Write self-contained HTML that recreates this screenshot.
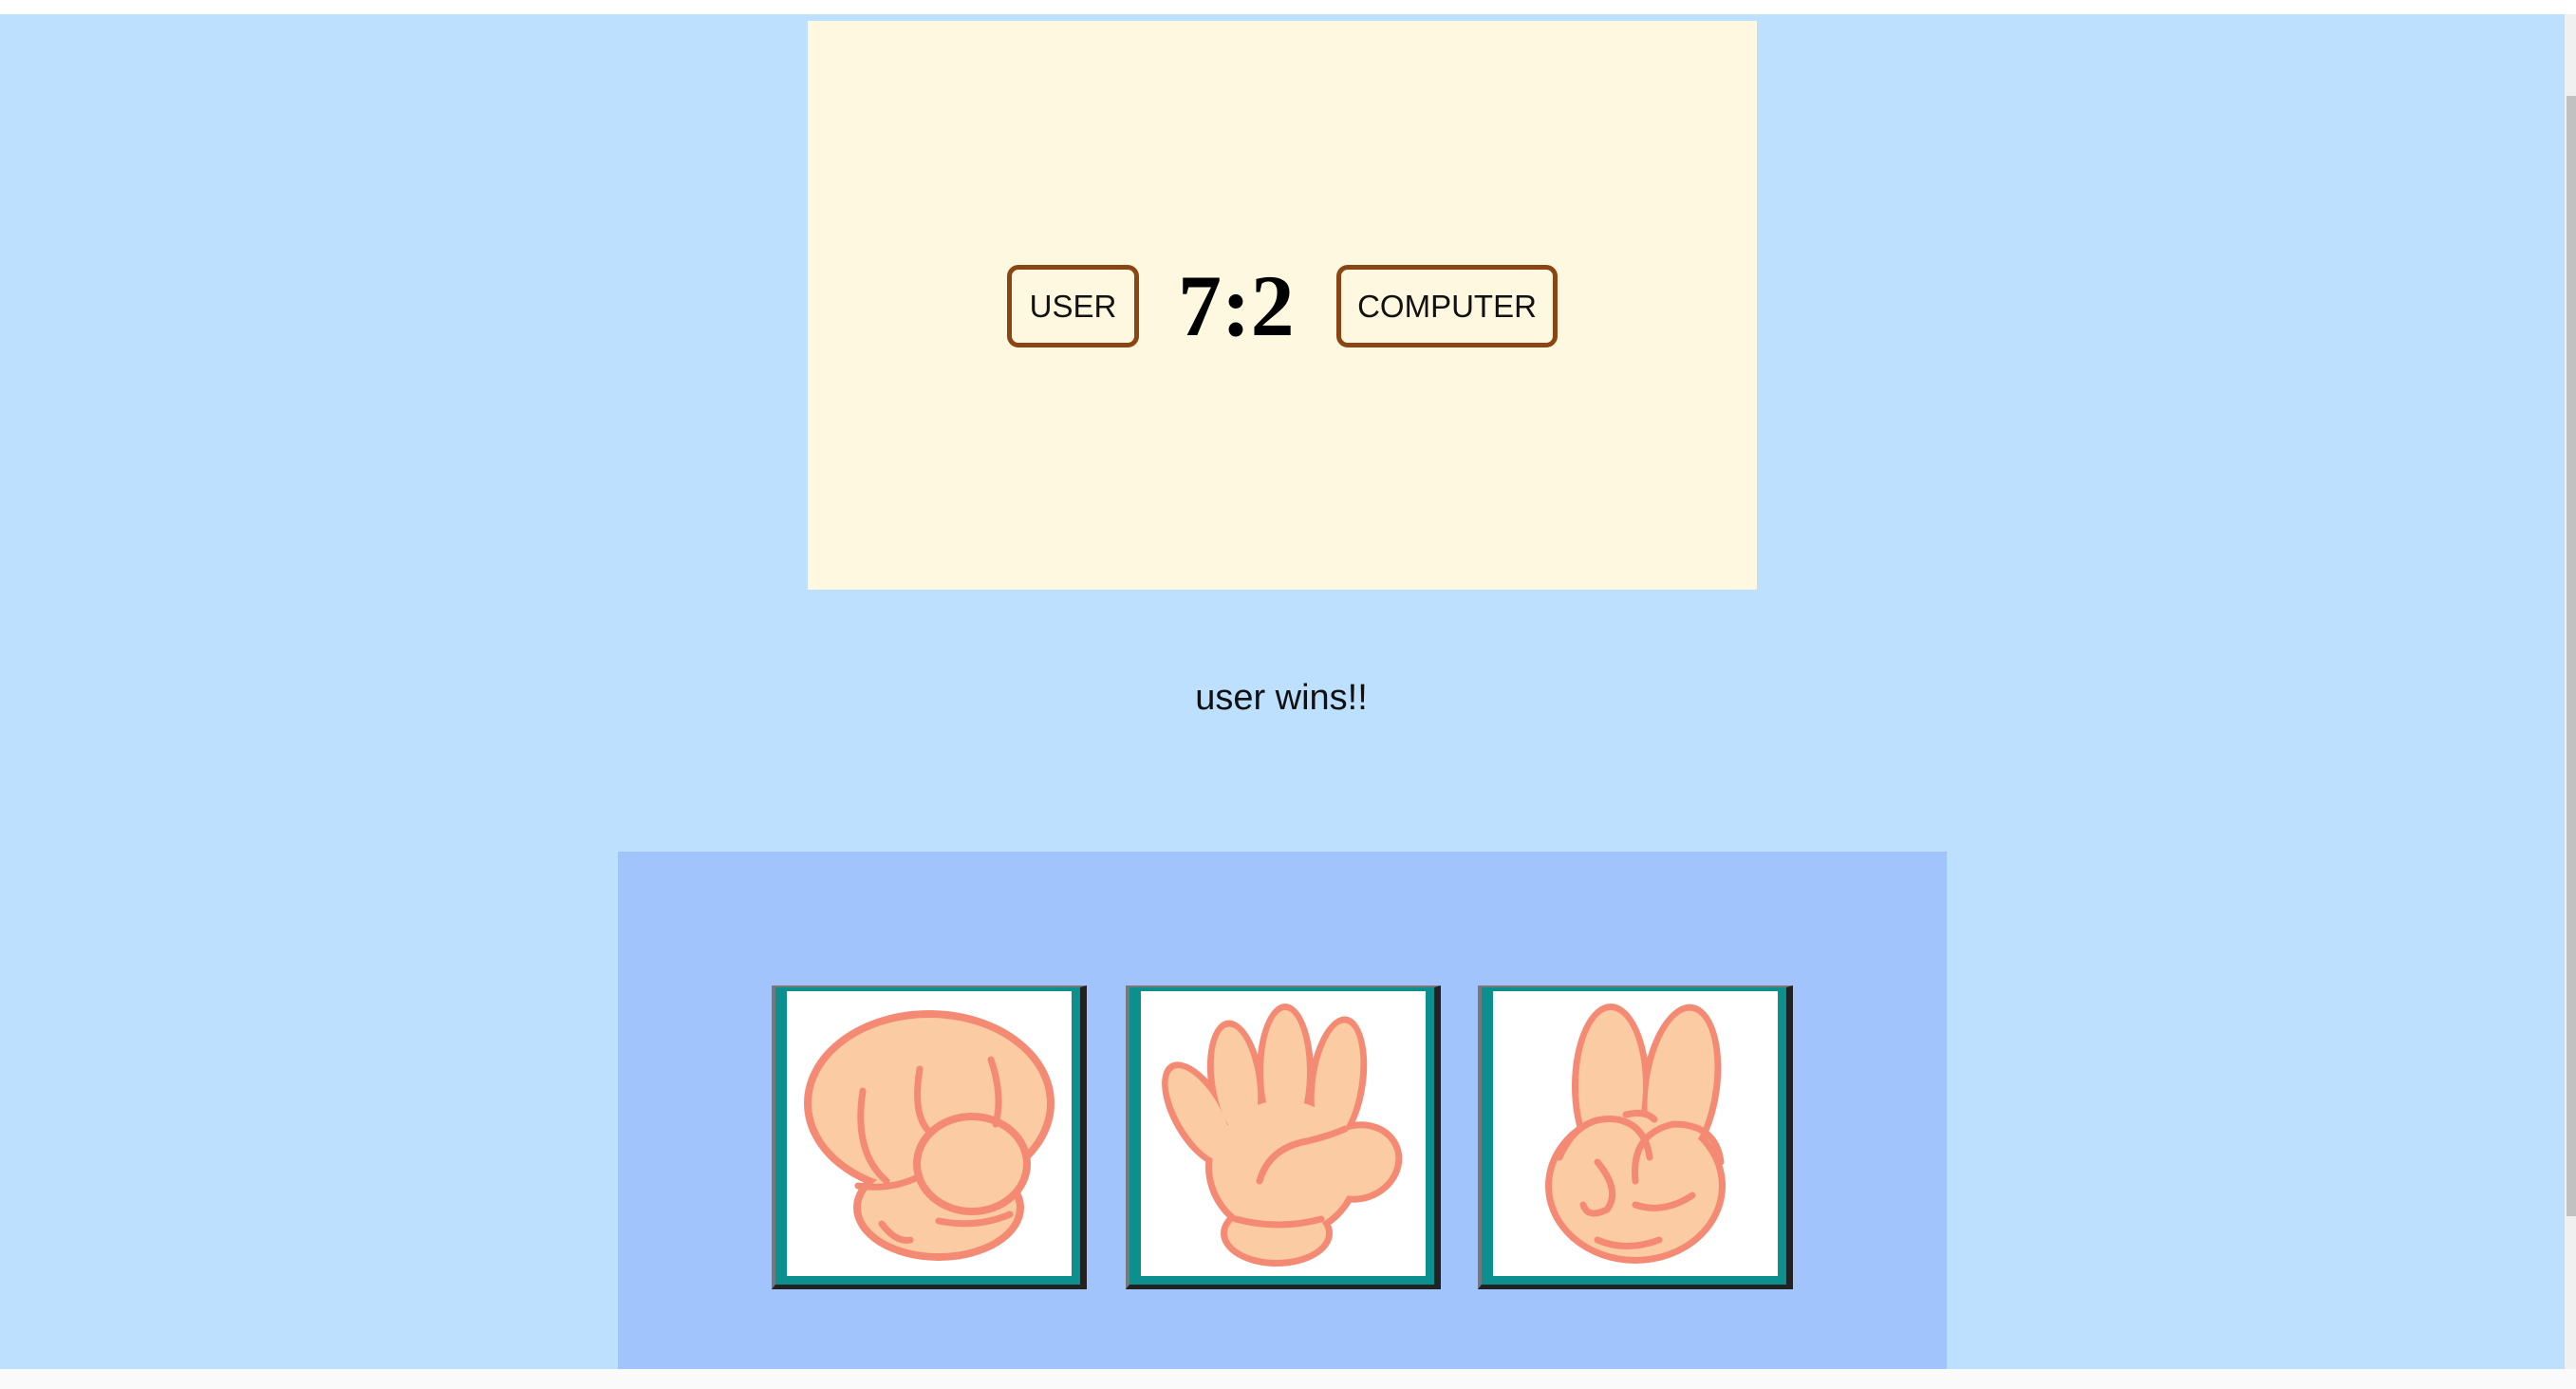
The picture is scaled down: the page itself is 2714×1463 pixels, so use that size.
<!DOCTYPE html>
<html><head><meta charset="utf-8"><style>
*{margin:0;padding:0;box-sizing:border-box}
body{width:2714px;height:1463px;background:#fafafa;position:relative;overflow:hidden;font-family:"Liberation Sans",Arial,sans-serif}
.topw{position:absolute;left:0;top:0;width:2714px;height:15px;background:#fff}
.main{position:absolute;left:0;top:15px;width:2702px;height:1427px;background:#bde0fe}
.sb{position:absolute;left:2702px;top:15px;width:12px;height:1427px;background:#f0f0f0}
.thumb{position:absolute;left:2px;top:86px;width:10px;height:1180px;background:#c1c1c1}
.cream{position:absolute;left:851px;top:22px;width:1000px;height:599px;background:#fef8e0}
.box{position:absolute;top:279px;height:87px;border:5px solid #8b4513;border-radius:12px;font-size:33px;color:#111;display:flex;align-items:center;justify-content:center}
.score{position:absolute;left:1241px;top:267px;font-family:"Liberation Serif",serif;font-weight:bold;font-size:92px;line-height:110px;color:#000}
.msg{position:absolute;left:1200px;width:300px;text-align:center;top:714px;font-size:38px;color:#111}
.panel{position:absolute;left:651px;top:897px;width:1400px;height:545px;background:#a2c4fd}
.card{position:absolute;top:1038px;width:332px;height:320px;background:#0b8f8f;border-style:solid;border-width:2px 7px 5px 4px;border-color:#777 #222 #222 #777}
.card svg{position:absolute;left:12px;top:4px;width:300px;height:300px;background:#fff}
</style></head><body>
<div class="topw"></div>
<div class="main"></div>
<div class="sb"><div class="thumb"></div></div>
<div class="cream"></div>
<div class="box" style="left:1061px;width:139px">USER</div>
<div class="score">7:2</div>
<div class="box" style="left:1408px;width:233px">COMPUTER</div>
<div class="msg">user wins!!</div>
<div class="panel"></div>

<div class="card" style="left:813px"><svg viewBox="0 0 300 300">
<g fill="#f48a73">
<ellipse cx="150" cy="118" rx="132" ry="98"/>
<ellipse cx="160" cy="228" rx="90" ry="56"/>
</g>
<g fill="#fbcba3">
<ellipse cx="150" cy="118" rx="124" ry="90"/>
<ellipse cx="160" cy="228" rx="82" ry="48"/>
</g>
<ellipse cx="195" cy="182" rx="62" ry="54" fill="#f48a73"/>
<ellipse cx="195" cy="182" rx="54" ry="46" fill="#fbcba3"/>
<g fill="none" stroke="#f48a73" stroke-width="7" stroke-linecap="round">
<path d="M80 105 Q70 170 105 200"/>
<path d="M140 82 Q132 130 150 148"/>
<path d="M215 72 Q228 110 220 140"/>
<path d="M75 205 Q110 210 140 195"/>
<path d="M160 242 Q200 250 235 235"/>
<path d="M100 245 Q115 265 130 262"/>
</g>
</svg></div>

<div class="card" style="left:1186px"><svg viewBox="0 0 300 300">
<g fill="#f48a73">
<ellipse cx="62" cy="130" rx="29" ry="62" transform="rotate(-30 62 130)"/>
<ellipse cx="100" cy="95" rx="29" ry="65" transform="rotate(-8 100 95)"/>
<ellipse cx="152" cy="85" rx="30" ry="72"/>
<ellipse cx="207" cy="95" rx="30" ry="69" transform="rotate(8 207 95)"/>
<ellipse cx="150" cy="185" rx="82" ry="77"/>
<ellipse cx="228" cy="180" rx="48" ry="42" transform="rotate(-20 228 180)"/>
<ellipse cx="143" cy="255" rx="59" ry="35"/>
</g>
<g fill="#fbcba3">
<ellipse cx="62" cy="130" rx="22" ry="55" transform="rotate(-30 62 130)"/>
<ellipse cx="100" cy="95" rx="22" ry="58" transform="rotate(-8 100 95)"/>
<ellipse cx="152" cy="85" rx="23" ry="65"/>
<ellipse cx="207" cy="95" rx="23" ry="62" transform="rotate(8 207 95)"/>
<ellipse cx="150" cy="185" rx="75" ry="70"/>
<ellipse cx="228" cy="180" rx="41" ry="35" transform="rotate(-20 228 180)"/>
<ellipse cx="143" cy="255" rx="52" ry="28"/>
</g>
<g fill="none" stroke="#f48a73" stroke-width="7" stroke-linecap="round">
<path d="M125 200 Q135 165 175 158 Q200 152 215 145"/>
<path d="M100 240 Q145 252 190 240"/>
</g>
</svg></div>

<div class="card" style="left:1557px"><svg viewBox="0 0 300 300">
<g fill="#f48a73">
<ellipse cx="124" cy="100" rx="41" ry="87"/>
<ellipse cx="198" cy="100" rx="41" ry="87" transform="rotate(8 198 100)"/>
<ellipse cx="150" cy="205" rx="95" ry="82"/>
</g>
<g fill="#fbcba3">
<ellipse cx="124" cy="100" rx="34" ry="80"/>
<ellipse cx="198" cy="100" rx="34" ry="80" transform="rotate(8 198 100)"/>
<ellipse cx="150" cy="205" rx="88" ry="75"/>
</g>
<g fill="none" stroke="#f48a73" stroke-width="7" stroke-linecap="round">
<path d="M70 175 Q90 130 130 135 Q160 140 165 175"/>
<path d="M150 200 Q145 150 190 140 Q235 140 240 180"/>
<path d="M110 180 Q135 210 120 230 Q100 240 95 225"/>
<path d="M150 225 Q180 235 210 215"/>
<path d="M110 262 Q140 275 175 262"/>
<path d="M140 130 Q160 125 170 135"/>
</g>
</svg></div>
</body></html>
